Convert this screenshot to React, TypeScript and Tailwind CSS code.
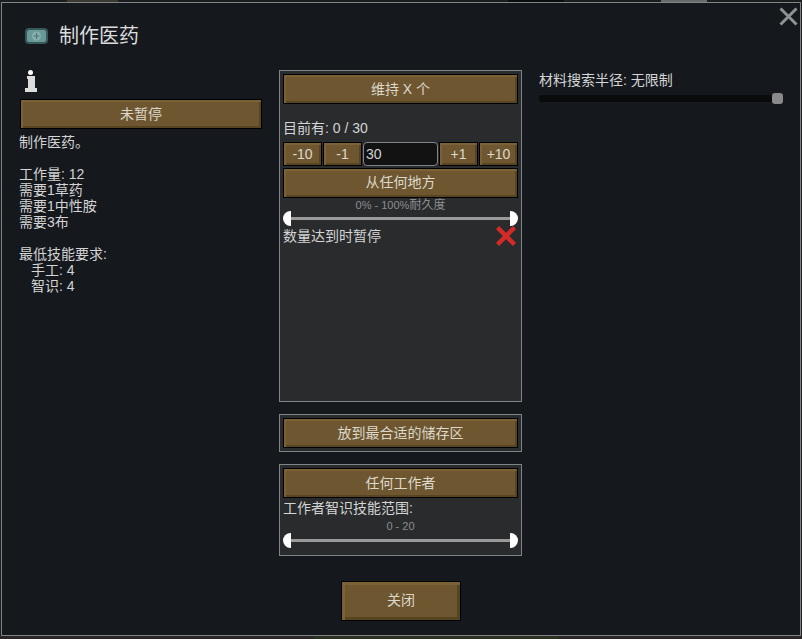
import type { ReactNode } from "react";

function WoodButton({ children, className }: { children: ReactNode; className: string }) {
    return (
        <div className={`flex items-center justify-center border border-black bg-[#6e5730] shadow-[inset_2px_2px_0_#7a6236,inset_-2px_-2px_0_#574522] text-[14px] text-[#dcd8cc] ${className}`}>
            {children}
        </div>
    );
}

function RangeSlider() {
    return (
        <div className="flex h-[15px] items-center">
            <div className="h-[15px] w-[8px] rounded-l-full bg-white" />
            <div className="h-[3px] flex-1 bg-[#9a9a9a]" />
            <div className="h-[15px] w-[8px] rounded-r-full bg-white" />
        </div>
    );
}

export default function App() {
    return (
        <div className="h-[639px] w-[802px] overflow-hidden bg-[#1f1d1d] font-['Liberation_Sans','Noto_Sans_CJK_SC',sans-serif] text-[14px] leading-[16px] text-[#d4d4d4]">
            {/* bit of the map showing above the window */}
            <div className="flex h-[2px]">
                <div className="w-[67px] bg-[#1c1d1e]" />
                <div className="w-[51px] bg-[#3a3a30]" />
                <div className="w-[390px] bg-[#1c1d1e]" />
                <div className="w-[56px] bg-[#0c0c0c]" />
                <div className="w-[97px] bg-[#1c1d1e]" />
                <div className="w-[46px] bg-[#6a6a6a]" />
                <div className="flex-1 bg-[#1c1d1e]" />
            </div>

            <div className="relative ml-px h-[634px] w-[800px] border border-[#7f8488] bg-[#15191e] pt-[18px]">
                {/* close */}
                <svg className="absolute right-[2px] top-[4px] h-[19px] w-[19px]" viewBox="0 0 19 19">
                    <path d="M1.5 1.5 L17.5 17.5 M17.5 1.5 L1.5 17.5" stroke="#8f9292" strokeWidth="3" />
                </svg>

                {/* title */}
                <div className="flex h-[30px] items-center pl-[23px]">
                    <svg className="h-[18px] w-[23px]" viewBox="0 0 23 18">
                        <rect x="0" y="1" width="23" height="16" rx="4" fill="#37595a" />
                        <rect x="2" y="3" width="19" height="12" rx="2.5" fill="#6a9a98" />
                        <circle cx="11.5" cy="9" r="4.5" fill="#86b0ae" />
                        <path d="M11.5 6 V12 M8.5 9 H14.5" stroke="#4a7676" strokeWidth="1.2" />
                    </svg>
                    <span className="ml-[11px] text-[20px] text-[#dcdcdc]">制作医药</span>
                </div>

                {/* columns */}
                <div className="mt-[19px] flex items-start pl-[17px]">
                    <div className="w-[243px]">
                        <svg className="ml-[6px] h-[22px] w-[12px]" viewBox="0 0 12 22">
                            <circle cx="5.5" cy="2.5" r="2.5" fill="#fff" />
                            <path d="M2 6 H10 V18 H12 V22 H0 V18 H3 V9 H2 Z" fill="#dcdcdc" />
                        </svg>
                        <WoodButton className="ml-px mt-[7px] h-[30px] w-[242px] pb-px">未暂停</WoodButton>
                        <div className="mt-[5px]">
                            <p>制作医药。</p>
                            <p className="mt-[16px]">工作量: 12</p>
                            <p>需要1草药</p>
                            <p>需要1中性胺</p>
                            <p>需要3布</p>
                            <p className="mt-[16px]">最低技能要求:</p>
                            <p className="pl-[12px]">手工: 4</p>
                            <p className="pl-[12px]">智识: 4</p>
                        </div>
                    </div>

                    <div className="ml-[17px] w-[243px]">
                        <div className="h-[332px] border border-[#7f8488] bg-[#292b2d] px-[3px] pt-[3px]">
                            <WoodButton className="h-[30px]">维持 X 个</WoodButton>
                            <p className="mt-[16px]">目前有: 0 / 30</p>
                            <div className="mt-[6px] flex h-[24px] gap-px">
                                <WoodButton className="w-[39px]">-10</WoodButton>
                                <WoodButton className="w-[39px]">-1</WoodButton>
                                <div className="flex w-[75px] items-center rounded-[4px] border border-[#7f8488] bg-[#121212] pl-[2px]">30</div>
                                <WoodButton className="w-[39px]">+1</WoodButton>
                                <WoodButton className="w-[39px]">+10</WoodButton>
                            </div>
                            <WoodButton className="mt-[2px] h-[30px] pb-[3px]">从任何地方</WoodButton>
                            <p className="h-[14px] text-center text-[12px] leading-[14px] text-[#8c8e90]">
                                <span className="text-[11px]">0% - 100%</span>耐久度
                            </p>
                            <div className="-mt-[1px]">
                                <RangeSlider />
                            </div>
                            <div className="-mt-[1px] flex items-start justify-between">
                                <span className="mt-[3px]">数量达到时暂停</span>
                                <svg className="mr-px h-[22px] w-[22px]" viewBox="0 0 22 22">
                                    <path d="M2.5 2.5 L19.5 19.5 M19.5 2.5 L2.5 19.5" stroke="#d22a26" strokeWidth="4.5" />
                                </svg>
                            </div>
                        </div>

                        <div className="mt-[12px] h-[38px] border border-[#7f8488] bg-[#292b2d] px-[3px] pt-[3px]">
                            <WoodButton className="h-[30px]">放到最合适的储存区</WoodButton>
                        </div>

                        <div className="mt-[12px] h-[92px] border border-[#7f8488] bg-[#292b2d] px-[3px] pt-[3px]">
                            <WoodButton className="h-[30px]">任何工作者</WoodButton>
                            <p className="mt-[2px]">工作者智识技能范围:</p>
                            <p className="mt-[3px] h-[14px] text-center text-[11px] leading-[14px] text-[#8c8e90]">0 - 20</p>
                            <div>
                                <RangeSlider />
                            </div>
                        </div>

                        <WoodButton className="ml-[62px] mt-[25px] h-[40px] w-[120px] pb-[3px] shadow-[inset_3px_3px_0_#7a6236,inset_-3px_-3px_0_#574522]">关闭</WoodButton>
                    </div>

                    <div className="ml-[17px] w-[244px] pt-[2px]">
                        <p>材料搜索半径: 无限制</p>
                        <div className="mt-[7px] flex h-[7px] items-center justify-end rounded-[3px] bg-[#0a0c0c]">
                            <div className="h-[11px] w-[11px] shrink-0 rounded-[3px] bg-[#8a8a8a]" />
                        </div>
                    </div>
                </div>
            </div>

            {/* bit of the map showing below the window */}
            <div className="flex h-[3px]">
                <div className="w-[313px] bg-[#2a2526]" />
                <div className="w-[246px] bg-[#2b3020]" />
                <div className="flex-1 bg-[#2a2526]" />
            </div>
        </div>
    );
}
